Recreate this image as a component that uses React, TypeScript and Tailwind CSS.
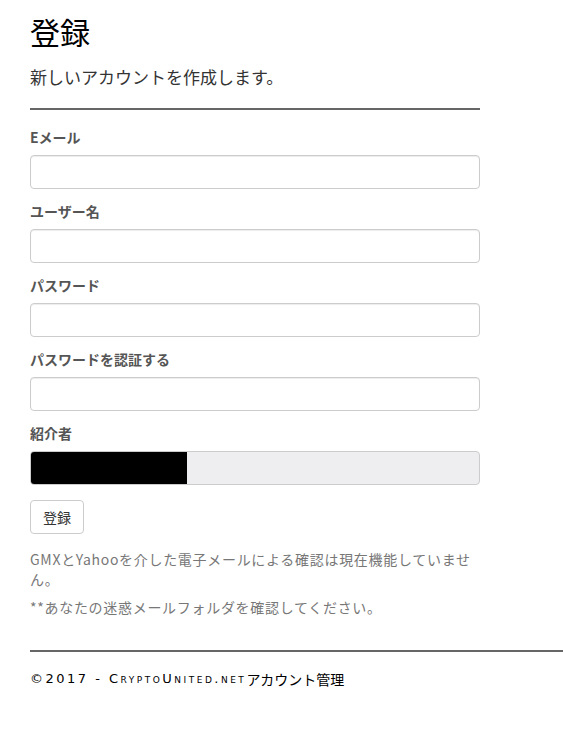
import React from 'react';

const fields = ['Eメール', 'ユーザー名', 'パスワード', 'パスワードを認証する'];

export default function App() {
    return (
        <div
            className="min-h-[730px] bg-white pl-[30px] text-[14px] text-[#333]"
            style={{ fontFamily: '"Noto Sans CJK JP", "Noto Sans", sans-serif' }}
        >
            <div className="w-[450px]">
                <h2 className="pt-[13px] text-[30px] leading-[36px] text-black">登録</h2>
                <h4 className="mt-[16px] text-[17px] leading-[24px] text-[#333]">新しいアカウントを作成します。</h4>
                <hr className="mt-[19px] border-0 border-t-2 border-[#666]" />

                {/* Form fields */}
                <div className="mt-[17px]">
                    {fields.map((f) => (
                        <div key={f} className="mb-[12px]">
                            <label className="mb-[8px] block text-[14px] font-bold leading-[20px] text-[#555]">{f}</label>
                            <input
                                type={f.startsWith('パスワード') ? 'password' : 'text'}
                                className="block h-[34px] w-full rounded-[4px] border border-[#ccc] bg-white px-3 shadow-[inset_0_1px_1px_rgba(0,0,0,0.075)] outline-none"
                            />
                        </div>
                    ))}
                    <div className="mb-[15px]">
                        <label className="mb-[8px] block text-[14px] font-bold leading-[20px] text-[#555]">紹介者</label>
                        <div className="flex h-[34px] w-full overflow-hidden rounded-[4px] border border-[#ccc] bg-[#eeeef0]">
                            <div className="h-full w-[156px] bg-black" />
                        </div>
                    </div>
                    <button className="h-[34px] rounded-[4px] border border-[#ccc] bg-white px-3 text-[14px] text-[#333]">
                        登録
                    </button>
                </div>

                <div className="mt-[15px] text-[14px] leading-[20px] tracking-[0.7px] text-[#777]">
                    <p className="mb-[8px]">GMXとYahooを介した電子メールによる確認は現在機能していません。</p>
                    <p>**あなたの迷惑メールフォルダを確認してください。</p>
                </div>
            </div>

            {/* Footer */}
            <hr className="mt-[33px] border-0 border-t-2 border-[#666]" />
            <footer className="mt-[17px] flex items-center text-[14px] leading-[20px] text-black">
                <span
                    className="text-[13px] tracking-[2.5px] [font-variant:small-caps]"
                    style={{ fontFamily: '"DejaVu Sans", sans-serif' }}
                >
                    ©2017 - CryptoUnited.net
                </span>
                <span>アカウント管理</span>
            </footer>
        </div>
    );
}
